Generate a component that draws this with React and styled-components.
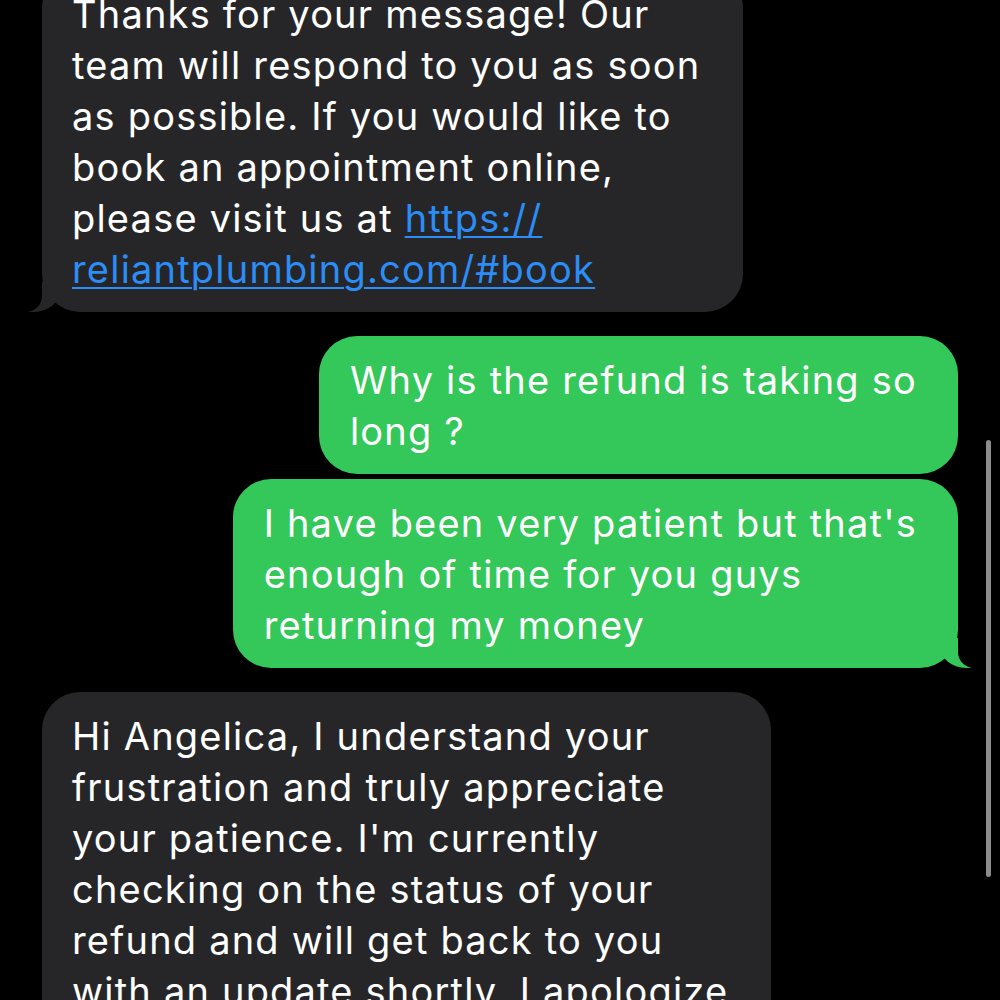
import React from "react";
import styled, { createGlobalStyle, css } from "styled-components";

const GlobalStyle = createGlobalStyle`
  html, body {
    margin: 0;
    padding: 0;
    background: #000;
  }
  body {
    font-family: Inter, "Noto Sans", sans-serif;
  }
`;

const Screen = styled.div`
  position: relative;
  width: 1000px;
  height: 1000px;
  overflow: hidden;
  background: #000;
`;

const Thread = styled.div`
  display: flex;
  flex-direction: column;
  margin-top: -30px;
  padding: 0 42px;
`;

const Group = styled.div`
  display: flex;
  flex-direction: column;
  align-items: ${(p) => (p.$mine ? "flex-end" : "flex-start")};
  gap: 5px;
  margin-bottom: 24px;
`;

const Bubble = styled.div`
  position: relative;
  padding: ${(p) => (p.$mine ? "19px 41px 17px 31px" : "19px 43px 17px 30px")};
  border-radius: 38px;
  font-size: 38px;
  line-height: 51px;
  letter-spacing: 1.2px;
  color: #fff;
  white-space: nowrap;
  background: ${(p) => (p.$mine ? "#34c759" : "#262628")};

  ${(p) =>
    p.$tail &&
    (p.$mine
      ? css`
          &::before {
            content: "";
            position: absolute;
            bottom: 0;
            right: -14px;
            width: 32px;
            height: 30px;
            background: #34c759;
            border-bottom-left-radius: 26px 22px;
          }
          &::after {
            content: "";
            position: absolute;
            bottom: 0;
            right: -38px;
            width: 38px;
            height: 32px;
            background: #000;
            border-bottom-left-radius: 16px;
          }
        `
      : css`
          &::before {
            content: "";
            position: absolute;
            bottom: 0;
            left: -14px;
            width: 32px;
            height: 30px;
            background: #262628;
            border-bottom-right-radius: 26px 22px;
          }
          &::after {
            content: "";
            position: absolute;
            bottom: 0;
            left: -38px;
            width: 38px;
            height: 32px;
            background: #000;
            border-bottom-right-radius: 16px;
          }
        `)}
`;

const Line = styled.span`
  display: block;
`;

const Link = styled.span`
  color: #2b8df5;
  text-decoration: underline;
  text-decoration-thickness: 2px;
  text-underline-offset: 4px;
`;

const Scrollbar = styled.div`
  position: absolute;
  top: 440px;
  right: 9px;
  width: 5px;
  height: 437px;
  border-radius: 3px;
  background: #8c8c8c;
`;

const messages = [
  {
    mine: false,
    lines: [
      "Thanks for your message! Our",
      "team will respond to you as soon",
      "as possible. If you would like to",
      "book an appointment online,",
      <>please visit us at <Link>https://</Link></>,
      <Link>reliantplumbing.com/#book</Link>,
    ],
  },
  {
    mine: true,
    lines: ["Why is the refund is taking so", "long ?"],
  },
  {
    mine: true,
    lines: [
      "I have been very patient but that's",
      "enough of time for you guys",
      "returning my money",
    ],
  },
  {
    mine: false,
    lines: [
      "Hi Angelica, I understand your",
      "frustration and truly appreciate",
      "your patience. I'm currently",
      "checking on the status of your",
      "refund and will get back to you",
      "with an update shortly. I apologize",
      "for the delay.",
    ],
  },
];

const groupMessages = (list) => {
  const groups = [];
  list.forEach((m) => {
    const last = groups[groups.length - 1];
    if (last && last.mine === m.mine) last.items.push(m);
    else groups.push({ mine: m.mine, items: [m] });
  });
  return groups;
};

export default function App() {
  return (
    <Screen>
      <GlobalStyle />
      <Thread>
        {groupMessages(messages).map((g, gi) => (
          <Group key={gi} $mine={g.mine}>
            {g.items.map((m, i) => (
              <Bubble key={i} $mine={m.mine} $tail={i === g.items.length - 1}>
                {m.lines.map((l, li) => (
                  <Line key={li}>{l}</Line>
                ))}
              </Bubble>
            ))}
          </Group>
        ))}
      </Thread>
      <Scrollbar />
    </Screen>
  );
}
